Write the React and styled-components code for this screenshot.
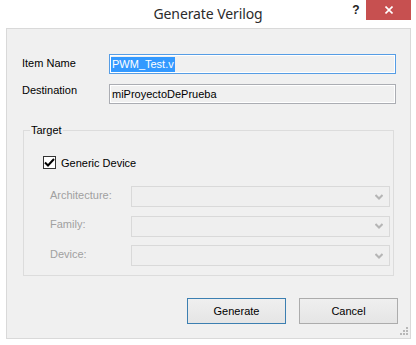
import React from 'react';
import styled, { createGlobalStyle } from 'styled-components';

const GlobalStyle = createGlobalStyle`
  html, body {
    margin: 0;
    padding: 0;
    background: #ffffff;
  }
  * {
    box-sizing: border-box;
  }
`

const Window = styled.div`
  width: 416px;
  height: 345px;
  display: flex;
  flex-direction: column;
  background: #ffffff;
  font-family: "Liberation Sans", Arial, sans-serif;
  font-size: 11px;
  color: #000;
`

const TitleBar = styled.div`
  height: 28px;
  flex: none;
  display: grid;
  grid-template-columns: 1fr auto 1fr;
  align-items: start;
`

const Title = styled.div`
  grid-column: 2;
  padding-top: 4px;
  font-family: "Noto Sans", "Open Sans", sans-serif;
  font-size: 14px;
  color: #2b2b2b;
  letter-spacing: -0.1px;
`

const Controls = styled.div`
  grid-column: 3;
  justify-self: end;
  display: flex;
  align-items: flex-start;
  padding-right: 5px;
`

const HelpButton = styled.div`
  width: 26px;
  height: 20px;
  display: flex;
  justify-content: center;
  padding-top: 3px;
  margin-right: -3px;
  font-family: "Liberation Sans", Arial, sans-serif;
  font-weight: bold;
  font-size: 12px;
  color: #222;
`

const CloseButton = styled.div`
  width: 45px;
  height: 20px;
  background: #c75050;
  display: flex;
  align-items: center;
  justify-content: center;
`

const Client = styled.div`
  position: relative;
  flex: 1;
  margin: 0 5px 6px 6px;
  border: 1px solid #d9d9d9;
  background: #f0f0f0;
  display: flex;
  flex-direction: column;
  padding: 25px 14px 0 15px;
`

const FieldRow = styled.div`
  display: grid;
  grid-template-columns: 87px 1fr;
  align-items: center;
  margin-bottom: ${p => p.$gap || 0}px;
`

const Label = styled.span`
  color: ${p => (p.$disabled ? '#a0a0a0' : '#000')};
  padding-bottom: ${p => 2 + (p.$raise || 0) * 2}px;
`

const TextBox = styled.div`
  height: 20px;
  border: 1px solid ${p => (p.$focused ? '#569de5' : '#abadb3')};
  box-shadow: inset 0 0 0 1px #ffffff;
  background: #f0f0f0;
  display: flex;
  align-items: center;
  padding-left: 1px;
  overflow: hidden;
  white-space: nowrap;
`

const Selected = styled.span`
  background: #3399ff;
  color: #ffffff;
  height: 15px;
  line-height: 15px;
  padding: 0 1px 0 1px;
`

const Plain = styled.span`
  padding-left: 1px;
  color: #000;
`

const Group = styled.fieldset`
  margin: 20px 2px 0 1px;
  border: 1px solid #dcdcdc;
  padding: 20px 3px 9px 6px;
`

const Legend = styled.legend`
  padding: 0 1px;
  color: #000;
`

const GroupBody = styled.div`
  padding-left: 13px;
`

const CheckRow = styled.label`
  display: flex;
  align-items: center;
  gap: 5px;
  margin-bottom: 17px;
`

const CheckBox = styled.span`
  width: 13px;
  height: 13px;
  border: 1px solid #333333;
  background: #ffffff;
  display: flex;
  align-items: center;
  justify-content: center;
`

const ComboRows = styled.div`
  display: flex;
  flex-direction: column;
  gap: 8.5px;
  padding-left: 7px;
`

const ComboRow = styled.div`
  display: grid;
  grid-template-columns: 81px 1fr;
  align-items: center;
`

const Combo = styled.div`
  height: 21px;
  border: 1px solid #d9d9d9;
  background: #efefef;
  display: flex;
  justify-content: flex-end;
  align-items: center;
  padding-right: 6px;
`

const ButtonBar = styled.div`
  display: flex;
  justify-content: flex-end;
  gap: 13px;
  margin-top: 22px;
  margin-right: -2px;
`

const Button = styled.div`
  width: 99px;
  height: 26px;
  border: 1px solid ${p => (p.$default ? '#3c7fb1' : '#acacac')};
  background: linear-gradient(#efefef, #e5e5e5);
  display: flex;
  align-items: center;
  justify-content: center;
  padding-bottom: 1px;
  color: #000;
`

const Grip = styled.svg`
  position: absolute;
  right: 1px;
  bottom: 2px;
`

const Chevron = () => (
  <svg width="8" height="6" viewBox="0 0 8 6">
    <path d="M0.5 1 L4 4.5 L7.5 1" fill="none" stroke="#b5b5b5" strokeWidth="2" />
  </svg>
)

function App() {
  const combos = ['Architecture:', 'Family:', 'Device:'];
  return (
    <>
      <GlobalStyle />
      <Window>
        <TitleBar>
          <Title>Generate Verilog</Title>
          <Controls>
            <HelpButton>?</HelpButton>
            <CloseButton>
              <svg width="8" height="8" viewBox="0 0 8 8">
                <path d="M0.5 0.5 L7.5 7.5 M7.5 0.5 L0.5 7.5" stroke="#ffffff" strokeWidth="1.6" />
              </svg>
            </CloseButton>
          </Controls>
        </TitleBar>

        <Client>
          <FieldRow $gap={10}>
            <Label>Item Name</Label>
            <TextBox $focused>
              <Selected>PWM_Test.v</Selected>
            </TextBox>
          </FieldRow>
          <FieldRow>
            <Label $raise={3}>Destination</Label>
            <TextBox>
              <Plain>miProyectoDePrueba</Plain>
            </TextBox>
          </FieldRow>

          <Group>
            <Legend>Target</Legend>
            <GroupBody>
              <CheckRow>
                <CheckBox>
                  <svg width="11" height="9" viewBox="0 0 11 9">
                    <path d="M1 4.5 L4 7.5 L10 1" fill="none" stroke="#000" strokeWidth="2" />
                  </svg>
                </CheckBox>
                Generic Device
              </CheckRow>
              <ComboRows>
                {combos.map(c => (
                  <ComboRow key={c}>
                    <Label $disabled $raise={1}>{c}</Label>
                    <Combo><Chevron /></Combo>
                  </ComboRow>
                ))}
              </ComboRows>
            </GroupBody>
          </Group>

          <ButtonBar>
            <Button $default>Generate</Button>
            <Button>Cancel</Button>
          </ButtonBar>

          <Grip width="9" height="9" viewBox="0 0 9 9">
            <g fill="#b8b8b8">
              <rect x="6" y="0" width="2" height="2" />
              <rect x="3" y="3" width="2" height="2" />
              <rect x="6" y="3" width="2" height="2" />
              <rect x="0" y="6" width="2" height="2" />
              <rect x="3" y="6" width="2" height="2" />
              <rect x="6" y="6" width="2" height="2" />
            </g>
          </Grip>
        </Client>
      </Window>
    </>
  );
}

export default App;
